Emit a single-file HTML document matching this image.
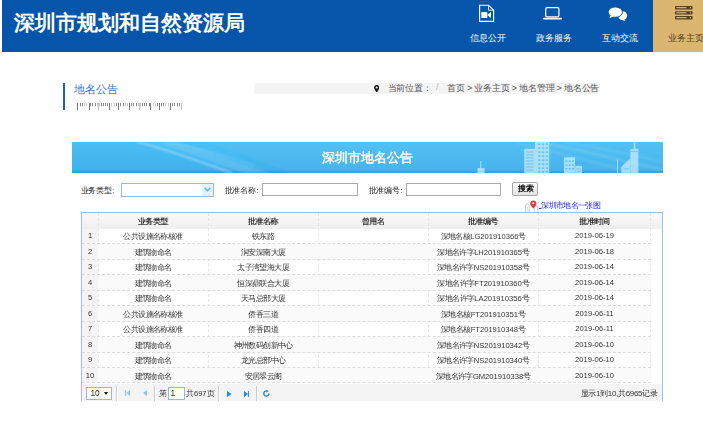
<!DOCTYPE html>
<html><head><meta charset="utf-8">
<style>
*{margin:0;padding:0;box-sizing:border-box}
html,body{width:703px;height:430px;overflow:hidden;background:#fff;font-family:"Liberation Sans",sans-serif;color:#333}
.abs{position:absolute}
#hdr{position:absolute;left:2px;top:0;width:701px;height:51.5px;background:#0556aa}
#logo{position:absolute;left:14px;top:9px;font-family:"Liberation Serif",serif;font-weight:bold;font-size:21px;color:#fff;letter-spacing:0px;white-space:nowrap}
.nav{position:absolute;top:0;width:66px;height:51.5px;text-align:center;color:#fff;font-size:8.5px;white-space:nowrap}
.nav .t{position:absolute;left:0;width:66px;top:33px}
.nav svg{position:absolute}
#tan{background:#dab671;color:#553a18}
#ttl{position:absolute;left:74px;top:81.5px;font-size:11px;color:#4475c0;white-space:nowrap}
#bar{position:absolute;left:62.8px;top:83px;width:2.2px;height:27px;background:#1d5fb4}
#ruler{position:absolute;left:77px;top:103px;width:106px;height:7px}
#crumb{position:absolute;left:254px;top:82.8px;width:345px;height:11.7px;background:#f4f4f4;border-radius:2px}
.ct{position:absolute;top:82.3px;font-size:9px;letter-spacing:-.2px;color:#555;white-space:nowrap}
#banner{position:absolute;left:72px;top:142px;width:591px;height:31px;background:linear-gradient(#4cbff4,#40b2ec 88%,#3099d8);overflow:hidden}
#btitle{position:absolute;left:322px;top:149px;font-family:"Liberation Serif",serif;font-weight:bold;font-size:13px;color:#fff;white-space:nowrap}
.lbl{position:absolute;top:184.6px;font-size:8px;letter-spacing:-.05px;color:#222;white-space:nowrap}
.inp{position:absolute;top:182.5px;height:13px;border:1px solid #aaa;background:#fff}
#grid{position:absolute;left:81px;top:212px;width:582px;height:189px;border:1px solid #9cc0ec;border-bottom:none;background:#fff}
.gh{position:absolute;left:82px;top:213px;width:580px;height:15.5px;background:linear-gradient(#f9f9f9,#efefef)}
.hc{position:absolute;top:216.2px;height:13px;text-align:center;font-size:8px;letter-spacing:-.55px;text-indent:-1.2px;color:#111;text-shadow:.4px 0 0 rgba(0,0,0,.55);white-space:nowrap}
.vl{position:absolute;top:213px;height:170px;width:0;border-left:1px dashed #e6e6e6}
.rw{position:absolute;left:82px;width:569px;height:15.47px;border-bottom:1px dashed #dcdcdc}
.rw.alt{background:#fafafa}
.rn{position:absolute;left:82px;width:16px;height:14.47px;background:#f4f4f4;font-size:7.6px;text-align:center;padding-top:2.7px;color:#333}
.cc{position:absolute;height:15px;text-align:center;font-size:8px;letter-spacing:-.6px;text-indent:-.6px;padding-top:2.6px;color:#333;white-space:nowrap}
.n{font-size:7.6px;letter-spacing:0}
#pager{position:absolute;left:82px;top:383.5px;width:580px;height:17.3px;background:#f4f4f4}
.sep{position:absolute;top:386px;width:2px;height:15px;border-left:1px solid #ccc;border-right:1px solid #fff}
</style></head><body>
<div id="hdr"></div>
<div id="logo">深圳市规划和自然资源局</div>

<div class="nav" style="left:455px">
  <svg style="left:24px;top:4px" width="17" height="19" viewBox="0 0 17 19"><path d="M0.6 1.2H9.6L14.6 6.2V17.4H0.6Z" fill="none" stroke="#fff" stroke-width="1.15"/><path d="M9.6 1.2V6.2H14.6" fill="none" stroke="#fff" stroke-width="0.9"/><rect x="2.3" y="8.1" width="6" height="5.9" fill="#fff"/><path d="M8.2 11L12 8V14z" fill="#fff"/></svg>
  <div class="t">信息公开</div>
</div>
<div class="nav" style="left:521px">
  <svg style="left:21px;top:6px" width="21" height="15" viewBox="0 0 21 15"><rect x="3.7" y="1.7" width="13.2" height="9.2" rx="1.4" fill="none" stroke="#fff" stroke-width="1.2"/><path d="M1.6 12.6H19.2" stroke="#fff" stroke-width="1.7" stroke-linecap="round"/></svg>
  <div class="t">政务服务</div>
</div>
<div class="nav" style="left:587px">
  <svg style="left:20px;top:5px" width="22" height="18" viewBox="0 0 22 18"><ellipse cx="15.6" cy="10.6" rx="4.6" ry="4.4" fill="#fff"/><path d="M16.6 13.8L18.6 16L13.2 14.6z" fill="#fff"/><ellipse cx="8.3" cy="7.1" rx="7.2" ry="5.2" fill="#fff" stroke="#0556aa" stroke-width="1"/><path d="M3.2 10.8L2.4 12.9L7 11.5z" fill="#fff"/></svg>
  <div class="t">互动交流</div>
</div>
<div class="nav" id="tan" style="left:653px">
  <svg style="left:22px;top:6px" width="18" height="14" viewBox="0 0 18 14"><g fill="#5a3f1c"><rect x="0" y="0" width="17.6" height="3.4" rx="0.7"/><rect x="0" y="5.2" width="17.6" height="3.2" rx="0.7"/><rect x="0" y="10" width="17.6" height="3.4" rx="0.7"/></g><g fill="#e9d2a0"><rect x="1.4" y="1.2" width="10" height="1"/><rect x="1.4" y="6.3" width="10" height="1"/><rect x="1.4" y="11.2" width="10" height="1"/><circle cx="15.4" cy="1.7" r=".6"/><circle cx="15.4" cy="6.8" r=".6"/><circle cx="15.4" cy="11.7" r=".6"/></g></svg>
  <div class="t">业务主页</div>
</div>

<div id="bar"></div>
<div id="ttl">地名公告</div>
<svg id="ruler" width="106" height="7"><rect x="0" y="0" width="1" height="7" fill="#7a7a7a"/><rect x="3" y="0" width="1" height="3.3" fill="#8a8a8a"/><rect x="5" y="0" width="1" height="3.3" fill="#8a8a8a"/><rect x="7" y="0" width="1" height="3.3" fill="#c8c8c8"/><rect x="9" y="0" width="1" height="3.3" fill="#c8c8c8"/><rect x="12" y="0" width="1" height="7" fill="#7a7a7a"/><rect x="13" y="0" width="1" height="3.3" fill="#8a8a8a"/><rect x="15" y="0" width="1" height="3.3" fill="#8a8a8a"/><rect x="18" y="0" width="1" height="3.3" fill="#8a8a8a"/><rect x="20" y="0" width="1" height="3.3" fill="#c8c8c8"/><rect x="21" y="0" width="1" height="7" fill="#c4c4c4"/><rect x="22" y="0" width="1" height="3.3" fill="#c8c8c8"/><rect x="24" y="0" width="1" height="3.3" fill="#8a8a8a"/><rect x="26" y="0" width="1" height="3.3" fill="#8a8a8a"/><rect x="28" y="0" width="1" height="3.3" fill="#8a8a8a"/><rect x="30" y="0" width="1" height="3.3" fill="#8a8a8a"/><rect x="32" y="0" width="1" height="7" fill="#7a7a7a"/><rect x="34" y="0" width="1" height="3.3" fill="#c8c8c8"/><rect x="37" y="0" width="1" height="3.3" fill="#c8c8c8"/><rect x="39" y="0" width="1" height="3.3" fill="#8a8a8a"/><rect x="41" y="0" width="1" height="7" fill="#7a7a7a"/><rect x="43" y="0" width="1" height="3.3" fill="#8a8a8a"/><rect x="46" y="0" width="1" height="3.3" fill="#8a8a8a"/><rect x="48" y="0" width="1" height="3.3" fill="#c8c8c8"/><rect x="50" y="0" width="1" height="3.3" fill="#c8c8c8"/><rect x="52" y="0" width="1" height="7" fill="#7a7a7a"/><rect x="54" y="0" width="1" height="3.3" fill="#8a8a8a"/><rect x="56" y="0" width="1" height="3.3" fill="#8a8a8a"/><rect x="59" y="0" width="1" height="3.3" fill="#8a8a8a"/><rect x="61" y="0" width="1" height="3.3" fill="#c8c8c8"/><rect x="62" y="0" width="1" height="7" fill="#c4c4c4"/><rect x="63" y="0" width="1" height="3.3" fill="#c8c8c8"/><rect x="65" y="0" width="1" height="3.3" fill="#8a8a8a"/><rect x="67" y="0" width="1" height="3.3" fill="#8a8a8a"/><rect x="69" y="0" width="1" height="3.3" fill="#8a8a8a"/><rect x="72" y="0" width="1" height="3.3" fill="#8a8a8a"/><rect x="73" y="0" width="1" height="7" fill="#7a7a7a"/><rect x="76" y="0" width="1" height="3.3" fill="#c8c8c8"/><rect x="78" y="0" width="1" height="3.3" fill="#c8c8c8"/><rect x="80" y="0" width="1" height="3.3" fill="#8a8a8a"/><rect x="82" y="0" width="1" height="7" fill="#7a7a7a"/><rect x="84" y="0" width="1" height="3.3" fill="#8a8a8a"/><rect x="86" y="0" width="1" height="3.3" fill="#8a8a8a"/><rect x="88" y="0" width="1" height="3.3" fill="#c8c8c8"/><rect x="91" y="0" width="1" height="3.3" fill="#c8c8c8"/><rect x="93" y="0" width="1" height="7" fill="#7a7a7a"/><rect x="95" y="0" width="1" height="3.3" fill="#8a8a8a"/><rect x="97" y="0" width="1" height="3.3" fill="#8a8a8a"/><rect x="100" y="0" width="1" height="3.3" fill="#8a8a8a"/><rect x="102" y="0" width="1" height="3.3" fill="#8a8a8a"/><rect x="104" y="0" width="1" height="7" fill="#c4c4c4"/></svg>

<div id="crumb"></div>
<svg class="abs" style="left:373.8px;top:84.6px" width="5.4" height="7.5" viewBox="0 0 5.4 7.5"><path d="M2.7 0C1.2 0 0 1.1 0 2.6 0 4.3 2.7 7.5 2.7 7.5S5.4 4.3 5.4 2.6C5.4 1.1 4.2 0 2.7 0zm0 3.5a1.05 1.05 0 1 1 0-2.1 1.05 1.05 0 0 1 0 2.1z" fill="#1a1a1a"/></svg>
<div class="ct" style="left:387.5px">当前位置：</div>
<div class="ct" style="left:436px;color:#bbb">/</div>
<div class="ct" style="left:447px">首页 &gt; 业务主页 &gt; 地名管理 &gt; 地名公告</div>

<div id="banner"><svg width="591" height="31" viewBox="72 142 591 31" style="position:absolute;left:0;top:0">
<defs><filter id="bl" x="-20%" y="-50%" width="140%" height="200%"><feGaussianBlur stdDeviation="0.9"/></filter></defs>
<g filter="url(#bl)">
<path d="M137 142 C165 148 200 162 232 173" fill="none" stroke="#d0f0fe" stroke-width="1.6" opacity=".6"/><path d="M150 142 C185 150 215 164 245 173 L270 173 C235 162 205 149 175 142z" fill="#c4ecfd" opacity=".18"/><path d="M165 142 C195 146 225 155 255 166" fill="none" stroke="#c4ecfd" stroke-width="1" opacity=".35"/>

<path d="M540 142 C580 150 620 160 663 170" fill="none" stroke="#c4ecfd" stroke-width="2" opacity=".25"/>
<path d="M565 142 C600 148 635 156 663 162" fill="none" stroke="#c4ecfd" stroke-width="1.5" opacity=".2"/>
<path d="M515 142 C565 155 605 165 635 173" fill="none" stroke="#c4ecfd" stroke-width="1.5" opacity=".2"/>
</g>
<path d="M200 142 C235 150 260 160 290 173 L663 173 L663 142z" fill="#fff" opacity=".04"/>
<g fill="#cdeefd" opacity=".72">
<rect x="480.2" y="161" width="1" height="8"/><rect x="477.5" y="168" width="7" height="5"/>
<rect x="524.2" y="148.8" width="11" height="24.2"/><rect x="535" y="142" width="14.2" height="31"/>
<rect x="564" y="157.3" width="11" height="15.7"/><rect x="575.2" y="165.9" width="6.8" height="7.1"/>
<rect x="617" y="159.5" width="1" height="13.5"/>
<path d="M621.3 173 L621.3 167 L630.4 158.3 L630.4 173z"/><rect x="630.4" y="148.8" width="8" height="24.2"/><rect x="633.8" y="142" width="1.6" height="6.8"/>
</g>
<g fill="#5cbbec" opacity=".85">
<rect x="526" y="151.5" width="7.5" height="0.9"/><rect x="526" y="154.5" width="7.5" height="0.9"/><rect x="526" y="157.5" width="7.5" height="0.9"/><rect x="526" y="160.5" width="7.5" height="0.9"/><rect x="526" y="163.5" width="7.5" height="0.9"/><rect x="526" y="166.5" width="7.5" height="0.9"/><rect x="526" y="169.5" width="7.5" height="0.9"/><rect x="538.2" y="143.3" width="2.2" height="1.6"/><rect x="542" y="143.3" width="2.2" height="1.6"/><rect x="545.8" y="143.3" width="2.2" height="1.6"/><rect x="538.2" y="147.3" width="2.2" height="1.6"/><rect x="542" y="147.3" width="2.2" height="1.6"/><rect x="545.8" y="147.3" width="2.2" height="1.6"/><rect x="538.2" y="151.3" width="2.2" height="1.6"/><rect x="542" y="151.3" width="2.2" height="1.6"/><rect x="545.8" y="151.3" width="2.2" height="1.6"/><rect x="538.2" y="155.3" width="2.2" height="1.6"/><rect x="542" y="155.3" width="2.2" height="1.6"/><rect x="545.8" y="155.3" width="2.2" height="1.6"/><rect x="538.2" y="159.3" width="2.2" height="1.6"/><rect x="542" y="159.3" width="2.2" height="1.6"/><rect x="545.8" y="159.3" width="2.2" height="1.6"/><rect x="538.2" y="163.3" width="2.2" height="1.6"/><rect x="542" y="163.3" width="2.2" height="1.6"/><rect x="545.8" y="163.3" width="2.2" height="1.6"/><rect x="538.2" y="167.3" width="2.2" height="1.6"/><rect x="542" y="167.3" width="2.2" height="1.6"/><rect x="545.8" y="167.3" width="2.2" height="1.6"/><rect x="538.2" y="171" width="2.2" height="1.6"/><rect x="542" y="171" width="2.2" height="1.6"/><rect x="545.8" y="171" width="2.2" height="1.6"/><rect x="565.5" y="160.5" width="2" height="1.5"/><rect x="568.8" y="160.5" width="2" height="1.5"/><rect x="572" y="160.5" width="2" height="1.5"/><rect x="565.5" y="164.3" width="2" height="1.5"/><rect x="568.8" y="164.3" width="2" height="1.5"/><rect x="572" y="164.3" width="2" height="1.5"/><rect x="565.5" y="168" width="2" height="1.5"/><rect x="568.8" y="168" width="2" height="1.5"/><rect x="572" y="168" width="2" height="1.5"/><rect x="576.5" y="168.5" width="4.5" height="0.8"/><rect x="576.5" y="171" width="4.5" height="0.8"/><rect x="631" y="151" width="6.5" height=".8"/><rect x="623.5" y="168.5" width="5.5" height=".8"/>
</g>
</svg></div>
<div id="btitle">深圳市地名公告</div>

<div class="lbl" style="left:80.5px">业务类型:</div>
<div class="inp" style="left:120.5px;width:93.5px;border-color:#95b8e7;top:183.2px;height:13.6px"></div>
<div class="lbl" style="left:224.5px">批准名称:</div>
<div class="inp" style="left:262px;width:96px"></div>
<div class="lbl" style="left:368.5px">批准编号:</div>
<div class="inp" style="left:406px;width:95px"></div>

<div class="abs" style="left:202px;top:184.2px;width:11px;height:11.6px;background:#e8f1ff"></div>
<svg class="abs" style="left:204.2px;top:187px" width="7" height="5" viewBox="0 0 7 5"><path d="M0.6 0.8L3.5 3.8L6.4 0.8" fill="none" stroke="#5ab0ea" stroke-width="1.3"/></svg>
<div class="abs" style="left:512.4px;top:182.3px;width:25.6px;height:13.3px;border:1px solid #a8a8a8;border-radius:2px;background:linear-gradient(#fff,#e3e3e3)"></div>
<div class="abs" style="left:518px;top:184px;font-size:7.6px;font-weight:bold;color:#000;white-space:nowrap">搜索</div>
<svg class="abs" style="left:525px;top:200px" width="14" height="12" viewBox="0 0 14 12"><path d="M0.4 12V6.2Q0.4 3.8 2.3 3.8Q4.2 3.8 4.2 6.2V12" fill="none" stroke="#b5b5b5" stroke-width="0.7"/><path d="M2.4 12V6.5" stroke="#c8c8c8" stroke-width="0.5"/><path d="M9.3 12V7.6Q9.3 5.6 11.1 5.6Q12.9 5.6 12.9 7.6V12" fill="none" stroke="#b5b5b5" stroke-width="0.7"/><path d="M8.3 0.4C6.6 0.4 5.2 1.7 5.2 3.4c0 2.1 3.1 5.1 3.1 5.1s3.1-3 3.1-5.1C11.4 1.7 10 0.4 8.3 0.4z" fill="#e03a45"/><circle cx="8.3" cy="3.3" r="1.05" fill="#fff"/></svg>
<div class="abs" style="left:539px;top:208px;width:2.3px;height:1px;background:#2a2ae8"></div>
<div class="abs" style="left:541.2px;top:199.6px;font-size:8px;letter-spacing:-.62px;color:#2424f0;white-space:nowrap">深圳市地名一张图</div>
<div id="grid"></div>
<div class="gh"></div>
<div class="hc" style="left:98.3px;width:110.2px">业务类型</div>
<div class="hc" style="left:208.5px;width:110.0px">批准名称</div>
<div class="hc" style="left:318.5px;width:110.0px">曾用名</div>
<div class="hc" style="left:428.5px;width:110.0px">批准编号</div>
<div class="hc" style="left:538.5px;width:112.5px">批准时间</div>
<div class="vl" style="left:97.8px"></div>
<div class="vl" style="left:208.0px"></div>
<div class="vl" style="left:318.0px"></div>
<div class="vl" style="left:428.0px"></div>
<div class="vl" style="left:538.0px"></div>
<div class="vl" style="left:650.1px"></div>
<div class="rw" style="top:228.80px"></div>
<div class="rn" style="top:228.80px">1</div>
<div class="cc" style="top:228.80px;left:98.3px;width:110.2px">公共设施名称核准</div>
<div class="cc" style="top:228.80px;left:208.5px;width:110.0px">铁东路</div>
<div class="cc" style="top:228.80px;left:428.5px;width:110.0px">深地名核<span class="n">LG201910366</span>号</div>
<div class="cc" style="top:228.80px;left:538.5px;width:112.5px"><span class="n">2019-06-19</span></div>
<div class="rw alt" style="top:244.27px"></div>
<div class="rn" style="top:244.27px">2</div>
<div class="cc" style="top:244.27px;left:98.3px;width:110.2px">建筑物命名</div>
<div class="cc" style="top:244.27px;left:208.5px;width:110.0px">润安深南大厦</div>
<div class="cc" style="top:244.27px;left:428.5px;width:110.0px">深地名许字<span class="n">LH201910365</span>号</div>
<div class="cc" style="top:244.27px;left:538.5px;width:112.5px"><span class="n">2019-06-18</span></div>
<div class="rw" style="top:259.74px"></div>
<div class="rn" style="top:259.74px">3</div>
<div class="cc" style="top:259.74px;left:98.3px;width:110.2px">建筑物命名</div>
<div class="cc" style="top:259.74px;left:208.5px;width:110.0px">太子湾望海大厦</div>
<div class="cc" style="top:259.74px;left:428.5px;width:110.0px">深地名许字<span class="n">NS201910358</span>号</div>
<div class="cc" style="top:259.74px;left:538.5px;width:112.5px"><span class="n">2019-06-14</span></div>
<div class="rw alt" style="top:275.21px"></div>
<div class="rn" style="top:275.21px">4</div>
<div class="cc" style="top:275.21px;left:98.3px;width:110.2px">建筑物命名</div>
<div class="cc" style="top:275.21px;left:208.5px;width:110.0px">恒深鼎联合大厦</div>
<div class="cc" style="top:275.21px;left:428.5px;width:110.0px">深地名许字<span class="n">FT201910360</span>号</div>
<div class="cc" style="top:275.21px;left:538.5px;width:112.5px"><span class="n">2019-06-14</span></div>
<div class="rw" style="top:290.68px"></div>
<div class="rn" style="top:290.68px">5</div>
<div class="cc" style="top:290.68px;left:98.3px;width:110.2px">建筑物命名</div>
<div class="cc" style="top:290.68px;left:208.5px;width:110.0px">天马总部大厦</div>
<div class="cc" style="top:290.68px;left:428.5px;width:110.0px">深地名许字<span class="n">LA201910356</span>号</div>
<div class="cc" style="top:290.68px;left:538.5px;width:112.5px"><span class="n">2019-06-14</span></div>
<div class="rw alt" style="top:306.15px"></div>
<div class="rn" style="top:306.15px">6</div>
<div class="cc" style="top:306.15px;left:98.3px;width:110.2px">公共设施名称核准</div>
<div class="cc" style="top:306.15px;left:208.5px;width:110.0px">侨香三道</div>
<div class="cc" style="top:306.15px;left:428.5px;width:110.0px">深地名核<span class="n">FT201910351</span>号</div>
<div class="cc" style="top:306.15px;left:538.5px;width:112.5px"><span class="n">2019-06-11</span></div>
<div class="rw" style="top:321.62px"></div>
<div class="rn" style="top:321.62px">7</div>
<div class="cc" style="top:321.62px;left:98.3px;width:110.2px">公共设施名称核准</div>
<div class="cc" style="top:321.62px;left:208.5px;width:110.0px">侨香四道</div>
<div class="cc" style="top:321.62px;left:428.5px;width:110.0px">深地名核<span class="n">FT201910348</span>号</div>
<div class="cc" style="top:321.62px;left:538.5px;width:112.5px"><span class="n">2019-06-11</span></div>
<div class="rw alt" style="top:337.09px"></div>
<div class="rn" style="top:337.09px">8</div>
<div class="cc" style="top:337.09px;left:98.3px;width:110.2px">建筑物命名</div>
<div class="cc" style="top:337.09px;left:208.5px;width:110.0px">神州数码创新中心</div>
<div class="cc" style="top:337.09px;left:428.5px;width:110.0px">深地名许字<span class="n">NS201910342</span>号</div>
<div class="cc" style="top:337.09px;left:538.5px;width:112.5px"><span class="n">2019-06-10</span></div>
<div class="rw" style="top:352.56px"></div>
<div class="rn" style="top:352.56px">9</div>
<div class="cc" style="top:352.56px;left:98.3px;width:110.2px">建筑物命名</div>
<div class="cc" style="top:352.56px;left:208.5px;width:110.0px">龙光总部中心</div>
<div class="cc" style="top:352.56px;left:428.5px;width:110.0px">深地名许字<span class="n">NS201910340</span>号</div>
<div class="cc" style="top:352.56px;left:538.5px;width:112.5px"><span class="n">2019-06-10</span></div>
<div class="rw alt" style="top:368.03px"></div>
<div class="rn" style="top:368.03px">10</div>
<div class="cc" style="top:368.03px;left:98.3px;width:110.2px">建筑物命名</div>
<div class="cc" style="top:368.03px;left:208.5px;width:110.0px">安居翠云阁</div>
<div class="cc" style="top:368.03px;left:428.5px;width:110.0px">深地名许字<span class="n">GM201910338</span>号</div>
<div class="cc" style="top:368.03px;left:538.5px;width:112.5px"><span class="n">2019-06-10</span></div>
<div id="pager"></div>
<div class="abs" style="left:86px;top:386.8px;width:25.8px;height:13.7px;border:1px solid #95b8e7;background:#fff"></div>
<div class="abs" style="left:90.5px;top:388.3px;font-size:8.3px;color:#333">10</div>
<svg class="abs" style="left:104px;top:392px" width="4" height="3" viewBox="0 0 4 3"><path d="M0 0h4L2 3z" fill="#111"/></svg>
<div class="sep" style="left:116px"></div>
<svg class="abs" style="left:124.5px;top:390.3px" width="5" height="6" viewBox="0 0 5 6"><rect x="0" y="0" width="1.2" height="6" fill="#8cc6ef"/><path d="M5 0v6L1.6 3z" fill="#8cc6ef"/></svg>
<svg class="abs" style="left:142.5px;top:390.3px" width="4" height="6" viewBox="0 0 4 6"><path d="M4 0v6L0 3z" fill="#8cc6ef"/></svg>
<div class="sep" style="left:153.5px"></div>
<div class="abs" style="left:158.8px;top:388.5px;font-size:7.5px;color:#333;white-space:nowrap">第</div>
<div class="abs" style="left:168px;top:386.8px;width:16.6px;height:13.7px;border:1px solid #95b8e7;background:#fff"></div>
<div class="abs" style="left:170.5px;top:388.3px;font-size:8.3px;color:#333">1</div>
<div class="abs" style="left:186px;top:388.5px;font-size:7.5px;color:#333;white-space:nowrap">共697页</div>
<div class="sep" style="left:218.3px"></div>
<svg class="abs" style="left:227px;top:390.5px" width="4.6" height="6.2" viewBox="0 0 4.6 6.2"><path d="M0 0v6.2L4.6 3.1z" fill="#1a8ae5"/></svg>
<svg class="abs" style="left:243.7px;top:390.5px" width="5.4" height="6.2" viewBox="0 0 5.4 6.2"><path d="M0 0v6.2L4 3.1z" fill="#1a8ae5"/><rect x="4.1" y="0" width="1.3" height="6.2" fill="#1a8ae5"/></svg>
<div class="sep" style="left:255.5px"></div>
<svg class="abs" style="left:262.5px;top:390px" width="7.4" height="7" viewBox="0 0 7.4 7"><path d="M6 3.5A2.6 2.6 0 1 1 3.7 0.9" fill="none" stroke="#1a8ae5" stroke-width="1.4"/><path d="M3.2 0l2.6 1.1-2.3 1.6z" fill="#1a8ae5"/></svg>
<div class="abs" style="left:580.5px;top:387.8px;font-size:8px;letter-spacing:-.3px;color:#333;white-space:nowrap">显示1到10,共6965记录</div>

</body></html>
